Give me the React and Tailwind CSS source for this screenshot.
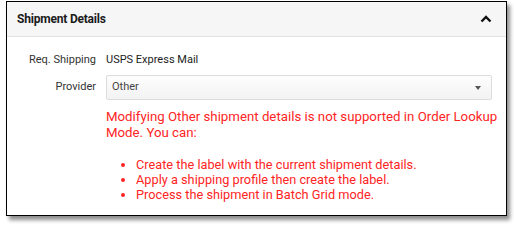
export default function App() {
  return (
    <div className="w-[514px] h-[226px] bg-white" style={{ fontFamily: "Roboto, 'Liberation Sans', sans-serif" }}>
      <div className="relative left-[6px] top-[1px] w-[501px] h-[215px] border-[1.5px] border-black bg-white shadow-[3px_4px_4px_rgba(0,0,0,0.45)] flex flex-col">
        <div className="h-[35px] shrink-0 bg-[#f6f6f6] border-b border-[#e2e2e2] flex items-center justify-between pl-[10px] pr-[12px]">
          <span className="text-[12px] font-bold text-[#1b1b1b] tracking-[-0.2px]">Shipment Details</span>
          <svg width="12" height="8" viewBox="0 0 12 8" className="mr-[2px]">
            <path d="M1.5 6.5 L6 2 L10.5 6.5" fill="none" stroke="#111" strokeWidth="2.4" />
          </svg>
        </div>
        <div className="flex flex-col pt-[15.5px]">
          <div className="flex items-center h-[16px]">
            <div className="w-[89px] text-right text-[11px] text-[#333]">Req. Shipping</div>
            <div className="ml-[10px] text-[11px] text-[#222]">USPS Express Mail</div>
          </div>
          <div className="flex items-center mt-[6.5px]">
            <div className="w-[89px] text-right text-[11px] text-[#333]">Provider</div>
            <div className="ml-[10px] w-[386px] h-[25px] border border-[#dcdcdc] rounded-[2px] bg-gradient-to-b from-[#fdfdfd] to-[#f3f3f3] flex items-center justify-between pl-[5px] pr-[10px]">
              <span className="text-[11px] text-[#444]">Other</span>
              <svg width="6" height="4" viewBox="0 0 6 4">
                <path d="M0 0 L6 0 L3 4 Z" fill="#555" />
              </svg>
            </div>
          </div>
          <div className="ml-[99px] mt-[9px] w-[395px] text-[13.25px] leading-[16px] text-[#ff2424]">
            Modifying Other shipment details is not supported in Order Lookup Mode. You can:
          </div>
          <ul className="ml-[117px] mt-[15.5px] text-[12.75px] leading-[15px] text-[#ff2424] list-disc pl-[12px]">
            <li>Create the label with the current shipment details.</li>
            <li>Apply a shipping profile then create the label.</li>
            <li>Process the shipment in Batch Grid mode.</li>
          </ul>
        </div>
      </div>
    </div>
  );
}
